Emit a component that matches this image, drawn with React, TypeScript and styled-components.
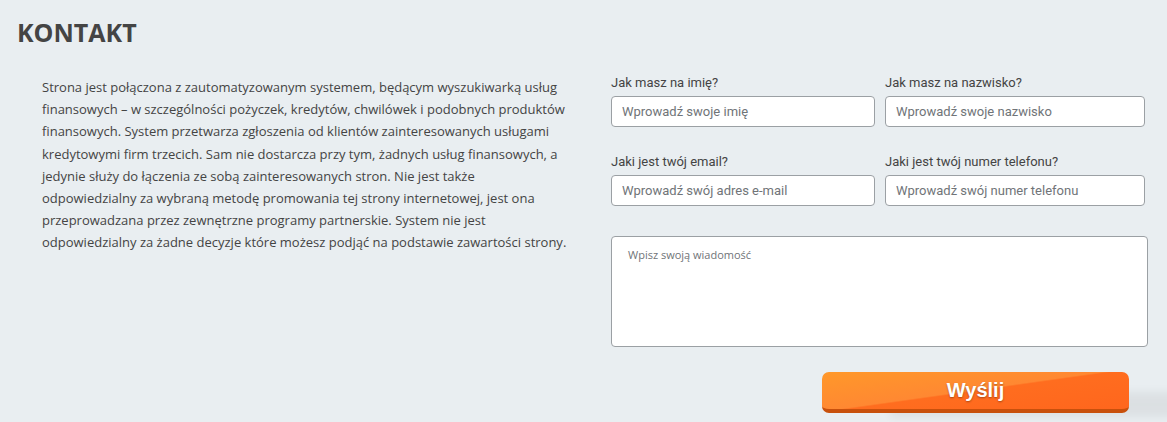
import React from "react"
import styled, { createGlobalStyle } from "styled-components"

const GlobalStyle = createGlobalStyle`
    html, body {
        margin: 0;
        padding: 0;
        background: #e9eef1;
    }
    * { box-sizing: border-box; }
`;

const Page = styled.div`
    width: 1167px;
    height: 422px;
    padding: 13px 0 0 17px;
    font-family: "Open Sans", sans-serif;
    color: #444;
    overflow: hidden;
`;
const Title = styled.h2`
    margin: 0;
    font-size: 25px;
    line-height: 38px;
    font-weight: 700;
    color: #444;
`;
const Columns = styled.div`
    display: grid;
    grid-template-columns: 527px 537px;
    column-gap: 42px;
    padding-left: 25px;
    margin-top: 21px;
`;
const Text = styled.p`
    margin: 0;
    padding-top: 4px;
    font-size: 13px;
    line-height: 22.2px;
    color: #444;
`;
const Form = styled.form`
    margin-top: 3px;
    display: grid;
    grid-template-columns: 264px 260px;
    column-gap: 10px;
    row-gap: 27px;
    align-content: start;
`;
const Field = styled.label`
    display: flex;
    flex-direction: column;
    gap: 5px;
    font-family: Roboto, "Liberation Sans", sans-serif;
    font-size: 13px;
    line-height: 16px;
    color: #444;
`;
const Input = styled.input`
    height: 31px;
    border: 1px solid #9ba0a4;
    border-radius: 4px;
    background: #fff;
    padding: 0 10px;
    font-family: Roboto, "Liberation Sans", sans-serif;
    font-size: 13px;
    color: #333;
    &::placeholder { color: #707478; }
`;
const Message = styled.textarea`
    grid-column: 1 / -1;
    height: 111px;
    width: 537px;
    margin-top: 3px;
    border: 1px solid #9ba0a4;
    border-radius: 4px;
    background: #fff;
    padding: 10px 16px;
    resize: none;
    font-family: "Open Sans", sans-serif;
    font-size: 11px;
    color: #333;
    &::placeholder { color: #707478; }
`;
const Actions = styled.div`
    grid-column: 1 / -1;
    display: flex;
    justify-content: flex-end;
    width: 537px;
    padding-right: 19px;
    margin-top: -2px;
`;
const Send = styled.button`
    width: 307px;
    height: 41px;
    border: none;
    border-bottom: 4px solid #c8500c;
    border-radius: 7px;
    background: linear-gradient(172deg, #ff982a 0%, #ff8832 49%, #ff6d1f 51%, #ff661d 100%);
    color: #fff;
    font-family: "Liberation Sans", Arial, sans-serif;
    font-weight: 700;
    font-size: 20px;
    text-shadow: 0 1px 2px rgba(0, 0, 0, 0.35);
    cursor: pointer;
    box-shadow: 60px 12px 10px -8px rgba(0, 0, 0, 0.06);
`;

export default function App() {
    return (
        <Page>
            <GlobalStyle />
            <Title>KONTAKT</Title>
            <Columns>
                <Text>
                    Strona jest połączona z zautomatyzowanym systemem, będącym wyszukiwarką usług finansowych – w szczególności pożyczek, kredytów, chwilówek i podobnych produktów finansowych. System przetwarza zgłoszenia od klientów zainteresowanych usługami kredytowymi firm trzecich. Sam nie dostarcza przy tym, żadnych usług finansowych, a jedynie służy do łączenia ze sobą zainteresowanych stron. Nie jest także odpowiedzialny za wybraną metodę promowania tej strony internetowej, jest ona przeprowadzana przez zewnętrzne programy partnerskie. System nie jest odpowiedzialny za żadne decyzje które możesz podjąć na podstawie zawartości strony.
                </Text>
                <Form onSubmit={e => e.preventDefault()}>
                    <Field>
                        Jak masz na imię?
                        <Input placeholder="Wprowadź swoje imię" />
                    </Field>
                    <Field>
                        Jak masz na nazwisko?
                        <Input placeholder="Wprowadź swoje nazwisko" />
                    </Field>
                    <Field>
                        Jaki jest twój email?
                        <Input placeholder="Wprowadź swój adres e-mail" />
                    </Field>
                    <Field>
                        Jaki jest twój numer telefonu?
                        <Input placeholder="Wprowadź swój numer telefonu" />
                    </Field>
                    <Message placeholder="Wpisz swoją wiadomość" />
                    <Actions>
                        <Send type="submit">Wyślij</Send>
                    </Actions>
                </Form>
            </Columns>
        </Page>
    )
}
